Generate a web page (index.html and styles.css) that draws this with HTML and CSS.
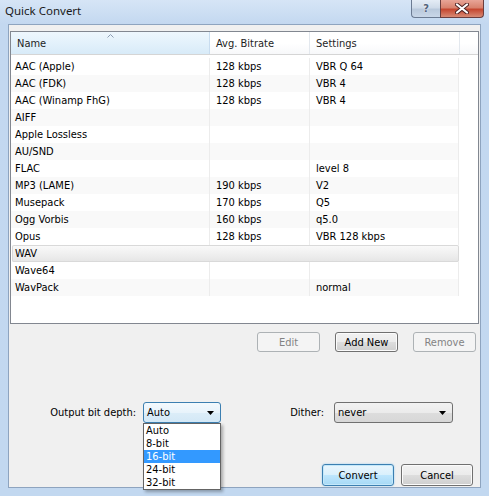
FILE: index.html
```html
<!DOCTYPE html>
<html lang="en">
<head>
    <meta charset="UTF-8">
    <title>Quick Convert</title>
    <link rel="stylesheet" href="styles.css">
</head>
<body>

    <div class="window">
        <div class="titlebar">
            <span class="title">Quick Convert</span>
            <div class="caption-btns">
                <div class="cap-btn cap-help">?</div>
                <div class="cap-btn cap-close">
                    <svg width="14" height="11" viewBox="0 0 14 11">
                        <path d="M2 1.5 L12 9.5 M12 1.5 L2 9.5" stroke="#4a2020" stroke-width="4" stroke-linecap="round"/>
                        <path d="M2 1.5 L12 9.5 M12 1.5 L2 9.5" stroke="#fff" stroke-width="2.2" stroke-linecap="round"/>
                    </svg>
                </div>
            </div>
        </div>

        <div class="client">
            <div class="listview">
                <div class="lv-head">
                    <div class="hcol col-name sorted">
                        Name
                        <svg class="sort-arrow" width="7" height="4" viewBox="0 0 7 4">
                            <polyline points="0.5,3.5 3.5,0.5 6.5,3.5" fill="none" stroke="#8c9cb2" stroke-width="1"/>
                        </svg>
                    </div>
                    <div class="hcol col-rate">Avg. Bitrate</div>
                    <div class="hcol col-set">Settings</div>
                    <div class="hcol col-fill"></div>
                </div>
                <div class="lv-body" id="lv-body">
                    <!-- rows are filled in by the script below -->
                </div>
            </div>

            <div class="btn-row">
                <button class="btn" disabled>Edit</button>
                <button class="btn">Add New</button>
                <button class="btn" disabled>Remove</button>
            </div>

            <div class="options">
                <label class="opt-label label-depth">Output bit depth:</label>
                <div class="combo-wrap">
                    <div class="combo focused">
                        <span>Auto</span>
                        <svg class="combo-arrow" width="7" height="4" viewBox="0 0 7 4"><polygon points="0,0 7,0 3.5,4" fill="#000"/></svg>
                    </div>
                    <ul class="dropdown">
                        <li>Auto</li>
                        <li>8-bit</li>
                        <li class="selected">16-bit</li>
                        <li>24-bit</li>
                        <li>32-bit</li>
                    </ul>
                </div>
                <label class="opt-label label-dither">Dither:</label>
                <div class="combo combo-dither">
                    <span>never</span>
                    <svg class="combo-arrow" width="7" height="4" viewBox="0 0 7 4"><polygon points="0,0 7,0 3.5,4" fill="#000"/></svg>
                </div>
            </div>

            <div class="dlg-btns">
                <button class="btn btn-default">Convert</button>
                <button class="btn">Cancel</button>
            </div>
        </div>
    </div>

    <script>
        // Presets shown in the list
        const presets = [
            ['AAC (Apple)', '128 kbps', 'VBR Q 64'],
            ['AAC (FDK)', '128 kbps', 'VBR 4'],
            ['AAC (Winamp FhG)', '128 kbps', 'VBR 4'],
            ['AIFF', '', ''],
            ['Apple Lossless', '', ''],
            ['AU/SND', '', ''],
            ['FLAC', '', 'level 8'],
            ['MP3 (LAME)', '190 kbps', 'V2'],
            ['Musepack', '170 kbps', 'Q5'],
            ['Ogg Vorbis', '160 kbps', 'q5.0'],
            ['Opus', '128 kbps', 'VBR 128 kbps'],
            ['WAV', '', ''],
            ['Wave64', '', ''],
            ['WavPack', '', 'normal']
        ];
        const body = document.getElementById('lv-body');

        presets.forEach((p, i) => {
            const row = document.createElement('div');
            row.className = 'lv-row';
            if (i % 2 === 1) row.classList.add('alt');
            if (p[0] === 'WAV') row.classList.add('selected');
            row.innerHTML = `
                <div class="cell col-name">${p[0]}</div>
                <div class="cell col-rate">${p[1]}</div>
                <div class="cell col-set">${p[2]}</div>
            `;
            body.appendChild(row);
        });
    </script>

</body>
</html>
```

FILE: styles.css
```css
html, body {
    margin: 0;
    padding: 0;
}

body {
    width: 489px;
    height: 496px;
    overflow: hidden;
    font-family: "DejaVu Sans Condensed", "DejaVu Sans", sans-serif;
    font-stretch: semi-condensed;
    font-size: 11px;
    color: #000;
}

.window {
    height: 496px;
    display: flex;
    flex-direction: column;
    background: linear-gradient(to bottom, #d6e5f6 0, #c3d8f0 24px, #c2d8f0 100%);
}

/* title bar */
.titlebar {
    height: 24px;
    display: flex;
    align-items: flex-start;
    flex-shrink: 0;
}

.title {
    margin: 3px 0 0 5px;
    font-family: "Noto Sans", sans-serif;
    font-stretch: normal;
    font-size: 11.5px;
    color: #1a1a1a;
}

.caption-btns {
    margin-left: auto;
    margin-right: 5px;
    display: flex;
}

.cap-btn {
    height: 18px;
    box-sizing: border-box;
    border: 1px solid #6b7b92;
    border-top: none;
    display: flex;
    justify-content: center;
    align-items: center;
}

.cap-help {
    width: 29px;
    border-right: none;
    border-radius: 0 0 0 4px;
    background: linear-gradient(to bottom, #e4ecf5 0%, #cfdbe9 45%, #b9c9dc 55%, #c9d7e8 100%);
    font-family: "DejaVu Sans", sans-serif;
    font-weight: bold;
    font-size: 11px;
    color: #52627a;
    text-shadow: 0 0 2px #fff;
}

.cap-close {
    width: 44px;
    border-color: #6b3e3e;
    border-radius: 0 0 4px 0;
    background: linear-gradient(to bottom, #e8a597 0%, #d8826e 45%, #c54730 55%, #d88b75 100%);
}

/* client area */
.client {
    margin: 0 8px;
    height: 464px;
    box-sizing: border-box;
    border: 1px solid #8ea4bf;
    background: #f0f0f0;
    display: flex;
    flex-direction: column;
}

.listview {
    margin: 6px 0 0 1px;
    width: 469px;
    height: 293px;
    box-sizing: border-box;
    border: 1px solid #828790;
    background: #fff;
    flex-shrink: 0;
}

.col-name { width: 199px; }
.col-rate { width: 100px; }
.col-set { width: 150px; }

.lv-head {
    display: flex;
    height: 23px;
    box-sizing: border-box;
    border-bottom: 1px solid #d5d5d5;
}

.hcol {
    position: relative;
    box-sizing: border-box;
    padding-left: 6px;
    padding-top: 1px;
    line-height: 22px;
    border-right: 1px solid #e3e8ee;
    background: linear-gradient(to bottom, #ffffff 0%, #ffffff 50%, #f7f8fa 100%);
    color: #1e1e1e;
}

.hcol.sorted {
    background: linear-gradient(to bottom, #eef7fd 0%, #e3f1fb 50%, #d8ebf8 100%);
    border-right-color: #c8dcef;
}

.hcol.col-fill {
    flex: 1;
    border-right: none;
}

.sort-arrow {
    position: absolute;
    top: 2px;
    left: 96px;
}

.lv-body {
    padding-top: 3px;
}

.lv-row {
    display: flex;
    width: 448px;
    height: 17px;
    line-height: 17px;
}

.lv-row.alt {
    background: #f9f9f9;
}

.cell {
    box-sizing: border-box;
    padding-left: 6px;
    border-right: 1px solid #ececec;
    white-space: nowrap;
}

.cell.col-name {
    padding-left: 4px;
}

.cell.col-set {
    width: 149px;
}

.lv-row.selected {
    margin-left: 1px;
    width: 447px;
    border-radius: 2px;
    box-shadow: inset 0 0 0 1px #d9d9d9;
    background: linear-gradient(to bottom, #fafafa 0%, #efefef 55%, #e5e5e5 100%);
}

.lv-row.selected .cell {
    border-right-color: transparent;
}

.lv-row.selected .col-name {
    width: 198px;
    padding-left: 3px;
}

/* edit / add / remove */
.btn-row {
    margin-top: 8px;
    padding-right: 4px;
    display: flex;
    justify-content: flex-end;
    gap: 15px;
}

.btn {
    width: 63px;
    height: 20px;
    box-sizing: border-box;
    padding: 0;
    border: 1px solid #707070;
    border-radius: 3px;
    background: linear-gradient(to bottom, #f2f2f2 0%, #ebebeb 50%, #dddddd 51%, #cfcfcf 100%);
    box-shadow: inset 0 0 0 1px #fbfbfb;
    font: inherit;
    color: #000;
}

.btn:disabled {
    border-color: #adb2b5;
    background: #f4f4f4;
    box-shadow: none;
    color: #838383;
}

/* bit depth / dither */
.options {
    margin-top: 50px;
    height: 21px;
    display: flex;
    align-items: center;
}

.opt-label {
    box-sizing: border-box;
    text-align: right;
}

.label-depth {
    width: 127px;
}

.label-dither {
    width: 103px;
}

.combo-wrap {
    position: relative;
    margin-left: 7px;
}

.combo {
    position: relative;
    height: 21px;
    box-sizing: border-box;
    border: 1px solid #707070;
    border-radius: 3px;
    background: linear-gradient(to bottom, #f2f2f2 0%, #ebebeb 50%, #dddddd 51%, #d7d7d7 100%);
    padding-left: 3px;
    line-height: 19px;
}

.combo.focused {
    width: 78px;
    border-color: #3c7fb1;
    background: linear-gradient(to bottom, #f3f9fd 0%, #e8f3fb 50%, #dcedf8 51%, #d3e8f6 100%);
}

.combo-dither {
    width: 119px;
    margin-left: 10px;
}

.combo-arrow {
    position: absolute;
    right: 6px;
    top: 8px;
}

.dropdown {
    position: absolute;
    top: 21px;
    left: 0;
    width: 78px;
    margin: 0;
    padding: 0;
    list-style: none;
    box-sizing: border-box;
    border: 1px solid #646464;
    background: #fff;
    box-shadow: 2px 2px 3px rgba(0, 0, 0, 0.3);
}

.dropdown li {
    height: 13px;
    line-height: 13px;
    padding-left: 2px;
}

.dropdown li.selected {
    background: #3399ff;
    color: #fff;
}

/* convert / cancel */
.dlg-btns {
    margin-top: 41px;
    padding-right: 7px;
    display: flex;
    justify-content: flex-end;
    gap: 7px;
}

.dlg-btns .btn {
    width: 72px;
    height: 22px;
}

.btn.btn-default {
    border-color: #3c7fb1;
    background: linear-gradient(to bottom, #eaf6fd 0%, #d9f0fc 50%, #bee6fd 51%, #a7d9f5 100%);
    box-shadow: inset 0 0 0 1px #c4e8fa, 0 0 2px #8fc8ef;
}
```
